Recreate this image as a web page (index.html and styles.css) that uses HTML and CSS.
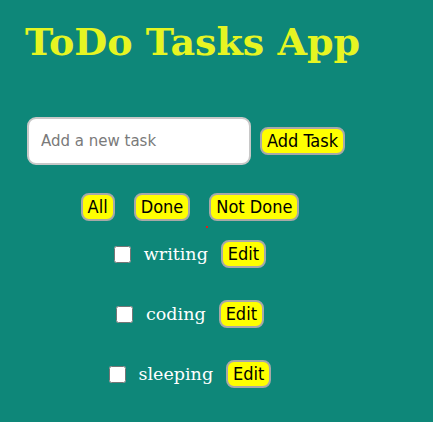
FILE: index.html
```html
<!DOCTYPE html>
<html>
<head>
<meta charset="utf-8">
<link rel="stylesheet" href="styles.css">
</head>
<body>
<div class="app">
  <h1 class="title">ToDo Tasks App</h1>
  <div class="add-row">
    <input class="task-input" type="text" placeholder="Add a new task">
    <button class="btn">Add Task</button>
  </div>
  <div class="filters">
    <button class="btn">All</button>
    <button class="btn">Done</button>
    <button class="btn">Not Done</button>
    <span class="dot"></span>
  </div>
  <ul class="tasks">
    <li class="task"><input type="checkbox" class="check"><span class="label">writing</span><button class="btn">Edit</button></li>
    <li class="task"><input type="checkbox" class="check"><span class="label">coding</span><button class="btn">Edit</button></li>
    <li class="task"><input type="checkbox" class="check"><span class="label">sleeping</span><button class="btn">Edit</button></li>
  </ul>
</div>
</body>
</html>
```
FILE: styles.css
```css
html, body {
  margin: 0;
  padding: 0;
  background: #0e8779;
  height: 100%;
}
.app {
  width: 330px;
  padding: 20px 0 0 25px;
}
.title {
  margin: 0;
  font-family: "DejaVu Serif", serif;
  font-weight: bold;
  font-size: 38px;
  line-height: 44px;
  color: #e6f522;
  white-space: nowrap;
}
.add-row {
  display: flex;
  align-items: center;
  gap: 9px;
  margin-top: 53px;
  padding-left: 2px;
}
.task-input {
  box-sizing: border-box;
  width: 224px;
  height: 48px;
  border: 2px solid #c8c8c8;
  border-radius: 9px;
  background: #fff;
  padding: 0 12px;
  font-family: "DejaVu Sans", sans-serif;
  font-size: 15px;
  outline: none;
}
.task-input::placeholder {
  color: #7a7a7a;
}
.btn {
  box-sizing: border-box;
  height: 28px;
  padding: 0 5px;
  background: #ffff00;
  border: 2px solid #a8a8a8;
  border-radius: 8px;
  font-family: "DejaVu Sans Condensed", "DejaVu Sans", sans-serif;
  font-size: 18px;
  color: #000;
  line-height: 24px;
}
.filters {
  position: relative;
  display: flex;
  justify-content: center;
  gap: 19px;
  margin-top: 28px;
}
.dot {
  position: absolute;
  left: 181px;
  top: 33px;
  width: 2px;
  height: 2px;
  background: #e0201b;
}
.tasks {
  list-style: none;
  margin: 3px 0 0;
  padding: 0;
}
.task {
  display: flex;
  justify-content: center;
  align-items: center;
  height: 60px;
}
.check {
  width: 17px;
  height: 17px;
  margin: 0 13px 0 0;
}
.label {
  font-family: "DejaVu Serif", serif;
  font-size: 17.5px;
  color: #fff;
  margin-right: 13px;
}
```
